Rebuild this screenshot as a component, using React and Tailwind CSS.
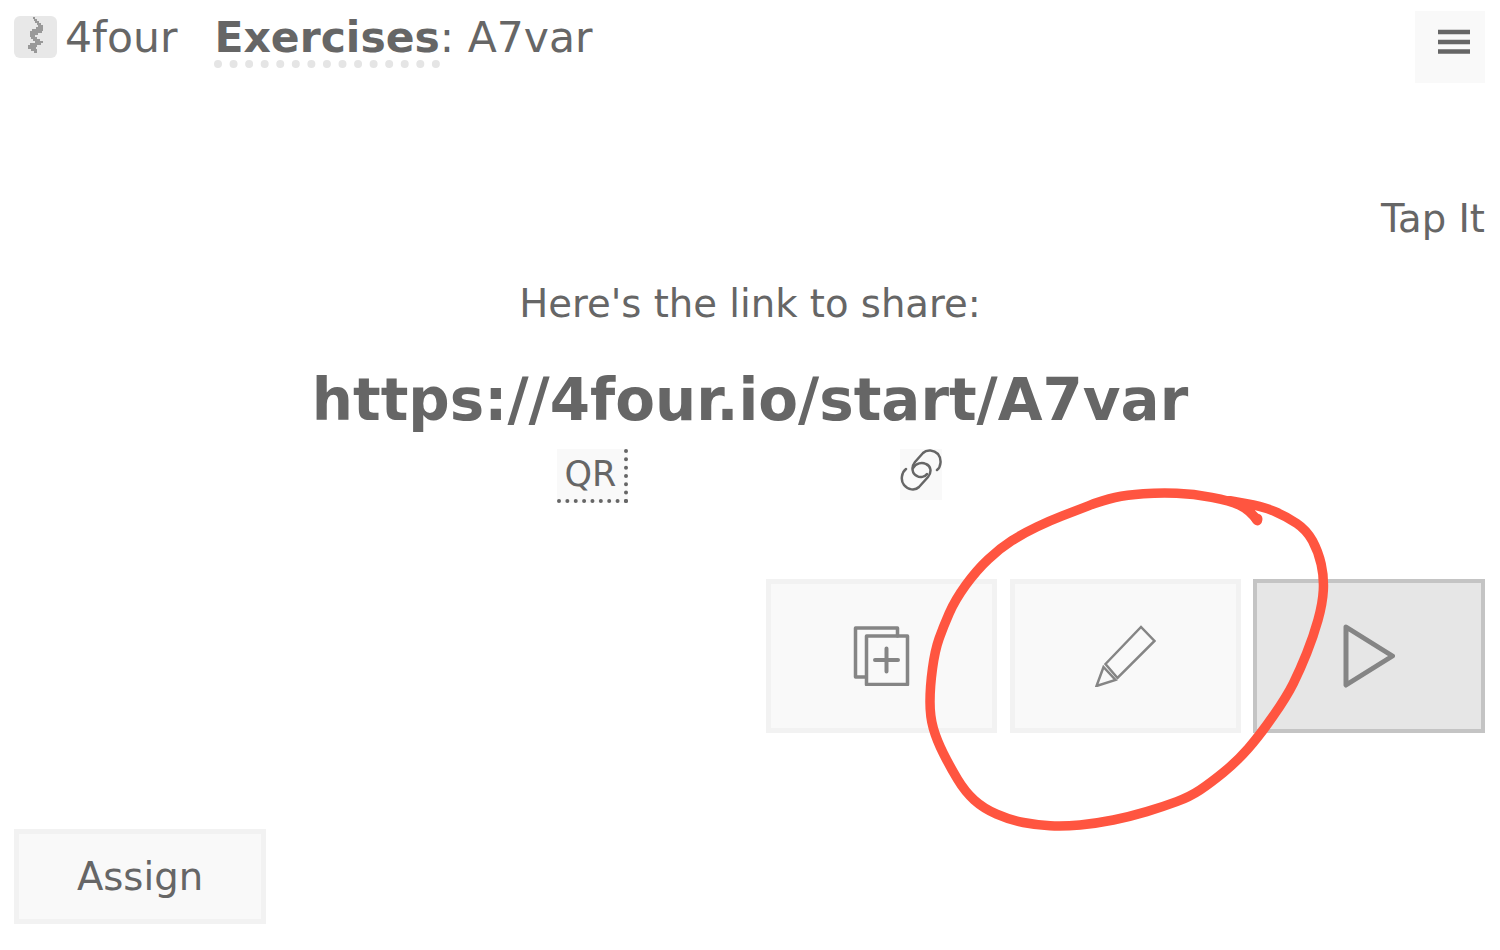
import React from "react";

const circlePoints = [
  [1042, 122], [1020, 90], [960, 62], [850, 42], [750, 38], [650, 45], [580, 60], [490, 95],
  [420, 122], [340, 160], [270, 205], [200, 270], [135, 360], [100, 440], [75, 510], [60, 620],
  [60, 710], [80, 780], [120, 860], [165, 935], [220, 985], [300, 1020], [380, 1035], [460, 1040],
  [560, 1030], [660, 1010], [760, 980], [840, 950], [900, 910], [980, 845], [1050, 765], [1130, 650],
  [1170, 570], [1210, 470], [1238, 370], [1242, 290], [1225, 215], [1190, 150], [1130, 110], [1060, 80], [960, 62],
].map(([x, y]) => [910 + x / 3, 480 + y / 3]);

// smooth the hand drawn ring through the midpoints
const circlePath = circlePoints.reduce((d, p, i, all) => {
  if (i === 0) return `M${p[0]} ${p[1]}`;
  if (i === all.length - 1) return `${d} L${p[0]} ${p[1]}`;
  const next = all[i + 1];
  return `${d} Q${p[0]} ${p[1]} ${(p[0] + next[0]) / 2} ${(p[1] + next[1]) / 2}`;
}, "");

// striped squiggle of the logo: [y, x from, x to]
const logoRows = [
  [1, 19, 21], [3, 20, 23], [5, 21, 25], [7, 23, 27], [9, 24, 29], [11, 22, 29], [13, 18, 29], [15, 16, 28],
  [17, 16, 24], [19, 16, 21], [21, 17, 23], [23, 19, 26], [25, 21, 29], [27, 16, 27], [29, 14, 23], [31, 14, 22],
  [33, 17, 23], [35, 20, 23],
];

const Logo = () => (
  <div className="w-[43px] h-[42px] rounded-[6px] bg-[#e8e8e8]">
    <svg width="43" height="42" viewBox="0 0 43 42" stroke="#777777" strokeWidth="1.400">
      {logoRows.map(([y, a, b]) => (
        <path key={y} d={`M${a} ${y + 1}H${b}`} />
      ))}
    </svg>
  </div>
);

const Action = ({ active, children }) => (
  <button
    className={`h-[154px] flex items-center justify-center ${
      active ? "w-[232px] -ml-px border-4 border-[#c4c4c4] bg-[#e6e6e6]" : "w-[231px] border-[5px] border-[#f2f2f2] bg-[#f9f9f9]"
    }`}
  >
    {children}
  </button>
);

export default function App() {
  return (
    <div className="relative w-[1500px] h-[950px] overflow-hidden bg-white text-[#666666] font-['DejaVu_Sans',sans-serif]">
      <div className="flex items-start justify-between pl-[14px] pr-[15px] pt-[11px] h-[186px]">
        <div className="flex items-start pt-[5px]">
          <Logo />
          <span className="ml-[8px] text-[42.500px] leading-[44px]">4four</span>
          <span className="ml-[37px] text-[42.500px] leading-[44px]">
            <b className="inline-block font-bold h-[52px] border-b-[8px] border-dotted border-[#e5e5e5]">Exercises</b>: A7var
          </span>
        </div>
        <button className="w-[70px] h-[72px] bg-[#f9f9f9] flex items-center justify-center">
          <svg width="32" height="26" viewBox="0 0 32 26" className="mt-[-10px] ml-[8px]">
            <path d="M0 3h32M0 13h32M0 22.500h32" stroke="#666666" strokeWidth="4.500" />
          </svg>
        </button>
      </div>

      <div className="mt-[11px] flex justify-end pr-[15px] text-[38.600px] leading-[44px]">Tap It</div>

      <div className="mt-[41px] text-center text-[38.600px] leading-[44px]">Here's the link to share:</div>

      <div className="mt-[40px] text-center font-bold text-[57.900px] leading-[68px]">https://4four.io/start/A7var</div>

      <div className="h-[54px] mt-[15px] flex">
        <div className="ml-[557px] w-[71px] h-[54px] bg-[#f9f9f9] border-r-4 border-b-4 border-dotted border-[#666666] text-[35px] leading-[50px] text-center">QR</div>
        <button className="ml-[272px] w-[42px] h-[51px] bg-[#f9f9f9] flex justify-center">
          <svg width="42" height="42" viewBox="0 0 42 42" fill="none" stroke="#666666" strokeWidth="2.500" strokeLinecap="round">
            <path d="M37 21C41 18 42 10 38 5C34 1 27 0 23 4L15 13C11 18 12 25 17 27C20 29 25 28 27 25" />
            <path d="M6 20C2 23 0 31 4 36C8 41 15 42 19 38L28 28C32 23 31 17 26 15C22 13 16 14 13 19" />
          </svg>
        </button>
      </div>

      <div className="mt-[76px] pr-[15px] flex justify-end gap-[13px]">
        <Action>
          <svg width="58" height="60" viewBox="0 0 58 60" fill="none" stroke="#858585" strokeWidth="3.500" strokeLinejoin="round" strokeLinecap="round">
            <path d="M13 51H2.500V2H44.500V10" />
            <rect x="13.500" y="10" width="41" height="48.500" />
            <path d="M33.500 22.500V45.500M22 34H45" strokeWidth="4" />
          </svg>
        </Action>
        <Action>
          <svg width="62" height="62" viewBox="0 0 62 62" fill="none" stroke="#858585" strokeWidth="2.500">
            <path d="M10.500 39L46 2L59.500 16L22.500 53Z" />
            <path d="M8.500 42L20.500 55L1.500 61Z" />
          </svg>
        </Action>
        <Action active>
          <svg width="52" height="64" viewBox="0 0 52 64" fill="none" stroke="#858585" strokeWidth="5" strokeLinejoin="round">
            <path d="M3 3L49.500 32L3 61Z" />
          </svg>
        </Action>
      </div>

      <button className="absolute left-[14px] top-[829px] w-[252px] h-[95px] border-[5px] border-[#f2f2f2] bg-[#f9f9f9] text-[38.600px]">Assign</button>

      {/* hand drawn annotation over the page */}
      <svg className="absolute inset-0 pointer-events-none" width="1500" height="950" fill="none">
        <path d={circlePath} stroke="#ff5540" strokeWidth="9.500" strokeLinecap="round" strokeLinejoin="round" />
        <circle cx="1257" cy="519" r="5.500" fill="#ff5540" />
      </svg>
    </div>
  );
}
